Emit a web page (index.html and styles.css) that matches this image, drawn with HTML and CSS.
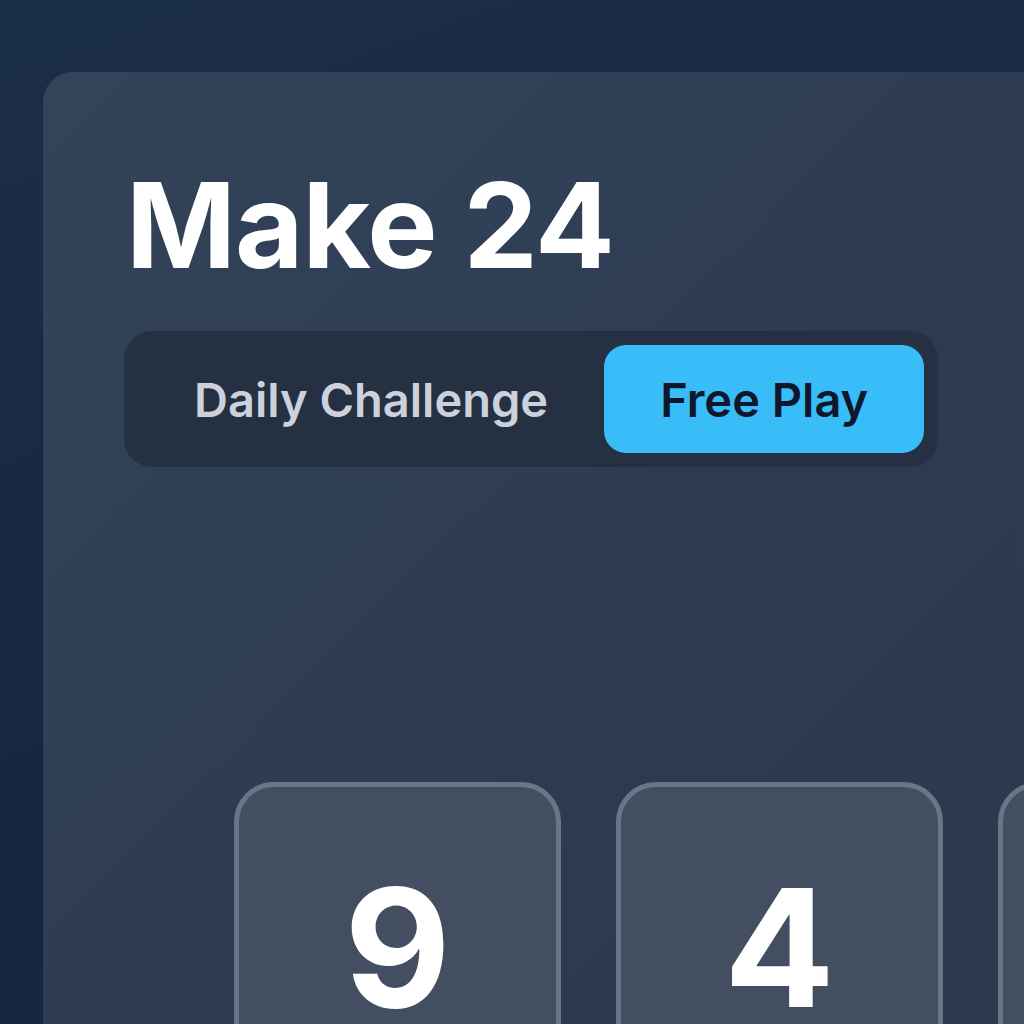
FILE: index.html
```html
<!DOCTYPE html>
<html lang="en">
<head>
  <meta charset="UTF-8" />
  <meta name="viewport" content="width=device-width, initial-scale=1.0"/>
  <title>Make 24</title>
  <link rel="stylesheet" href="styles.css">
</head>
<body>

  <!-- Tarjeta principal del juego -->
  <div class="juego">
    <h1 class="titulo">Make 24</h1>

    <div class="modos">
      <button class="modo">Daily Challenge</button>
      <button class="modo activo">Free Play</button>
    </div>

    <!-- Cartas con los numeros -->
    <div class="cartas">
      <div class="carta">9</div>
      <div class="carta">4</div>
      <div class="carta">6</div>
      <div class="carta">1</div>
    </div>
  </div>

</body>
</html>
```

FILE: styles.css
```css
* { margin: 0; padding: 0; box-sizing: border-box; }

html, body {
  height: 100%;
  overflow: hidden;
}

body {
  font-family: Inter, "Noto Sans", sans-serif;
  background: linear-gradient(160deg, #1b2e48 0%, #172740 50%, #16253d 100%);
  color: #fff;
  padding: 72px 0 0 43px;
}

.juego {
  width: 1400px;
  min-height: 1200px;
  border-radius: 30px;
  background: linear-gradient(135deg, #324459 0%, #2d3b52 45%, #2c394e 100%);
  padding: 94px 0 0 81px;
}

.titulo {
  font-size: 118px;
  font-weight: 700;
  line-height: 1;
  letter-spacing: -1px;
  margin-left: 2px;
}

.modos {
  display: inline-flex;
  margin-top: 47px;
  padding: 14px;
  background: #253143;
  border-radius: 28px;
}

.modo {
  font-family: inherit;
  font-size: 47px;
  font-weight: 600;
  height: 108px;
  padding: 0 56px;
  border: none;
  border-radius: 22px;
  background: transparent;
  color: #cbd2dc;
  cursor: pointer;
}

.modo.activo {
  background: #38bdf8;
  color: #0f172a;
}

.cartas {
  display: flex;
  gap: 55px;
  margin-top: 315px;
  margin-left: 110px;
}

.carta {
  width: 327px;
  height: 332px;
  flex-shrink: 0;
  border: 5px solid #6a7688;
  border-radius: 40px;
  background: #434f61;
  display: flex;
  align-items: center;
  justify-content: center;
  font-size: 164px;
  font-weight: 700;
  line-height: 1;
}
```
